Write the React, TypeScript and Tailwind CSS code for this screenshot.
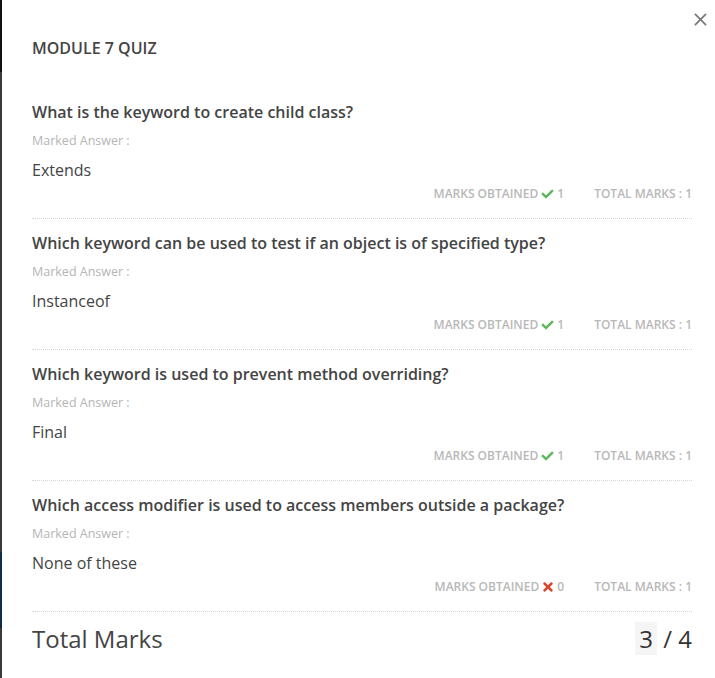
import { FaCheck, FaTimes } from "react-icons/fa";

type Item = {
  question: string;
  answer: string;
  correct: boolean;
};

const items: Item[] = [
  { question: "What is the keyword to create child class?", answer: "Extends", correct: true },
  {
    question: "Which keyword can be used to test if an object is of specified type?",
    answer: "Instanceof",
    correct: true,
  },
  { question: "Which keyword is used to prevent method overriding?", answer: "Final", correct: true },
  {
    question: "Which access modifier is used to access members outside a package?",
    answer: "None of these",
    correct: false,
  },
];

function QuestionBlock({ item }: { item: Item }) {
  return (
    <div className="border-b border-dotted border-[#d6d6d6] pb-[16px]">
      <h3 className="text-[16px] font-semibold leading-[20px] text-[#444]">{item.question}</h3>
      <p className="mt-[11px] text-[12.5px] leading-[16px] text-[#b5b5b5]">Marked Answer :</p>
      <p className="mt-[10px] text-[16px] leading-[22px] text-[#444]">{item.answer}</p>
      <div className="mt-[5px] flex justify-end gap-[30px] text-[12px] font-semibold uppercase leading-[16px] text-[#b8b8b8]">
        <span className="flex items-center">
          Marks Obtained
          {item.correct ? (
            <FaCheck className="mx-[3px] h-[12px] w-[13px] text-[#5cb85c]" />
          ) : (
            <FaTimes className="mx-[3px] h-[14px] w-[12px] text-[#d9452a]" />
          )}
          {item.correct ? 1 : 0}
        </span>
        <span>Total Marks : 1</span>
      </div>
    </div>
  );
}

export default function App() {
  return (
    <div
      className="flex min-h-[678px] w-[715px] bg-white"
      style={{ fontFamily: '"Open Sans", "Noto Sans", sans-serif' }}
    >
      <div className="flex w-[2px] flex-col">
        <div className="h-[72px] bg-[#111]" />
        <div className="h-[480px] bg-[#3a3a3a]" />
        <div className="h-[76px] bg-[#0e2b48]" />
        <div className="flex-1 bg-[#3a3a3a]" />
      </div>
      <div className="relative flex-1 pl-[30px] pr-[23px] pt-[38px]">
        <button className="absolute right-[8px] top-[13px] text-[#777]">
          <svg width="13" height="13" viewBox="0 0 14 14" fill="none" stroke="currentColor" strokeWidth="1.8">
            <path d="M1 1l12 12M13 1L1 13" />
          </svg>
        </button>
        <h2 className="text-[16px] font-semibold leading-[20px] text-[#444]">MODULE 7 QUIZ</h2>
        <div className="mt-[44px] flex flex-col gap-[14px]">
          {items.map((it) => (
            <QuestionBlock key={it.question} item={it} />
          ))}
        </div>
        <div className="mt-[11px] flex items-center justify-between">
          <span className="text-[24px] leading-[32px] text-[#444]">Total Marks</span>
          <span className="text-[24px] leading-[32px] text-[#333]">
            <span className="bg-[#f5f5f5] px-[4px]">3</span> / 4
          </span>
        </div>
      </div>
    </div>
  );
}
